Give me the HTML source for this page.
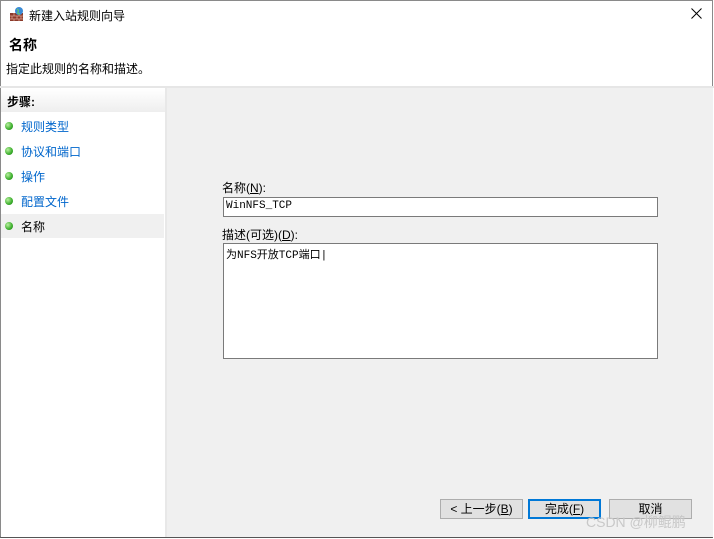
<!DOCTYPE html>
<html><head><meta charset="utf-8"><style>
*{margin:0;padding:0;box-sizing:border-box}
body{width:714px;height:539px;background:#fff;font-family:"Liberation Sans","Noto Sans CJK SC",sans-serif;font-size:12px;color:#000;position:relative;overflow:hidden}
.win{position:absolute;left:0;top:0;width:713px;height:538px;border:1px solid #8a8a8a;border-bottom:2px solid #555;background:#fff}
.in{position:absolute;left:-1px;top:-1px;width:714px;height:539px}
.abs{position:absolute;white-space:nowrap}
.dot{position:absolute;left:5px;width:8px;height:8px;border-radius:50%;background:radial-gradient(circle at 35% 35%,#b8f0a0,#3cae2c 60%,#1d7a16)}
.step{position:absolute;left:21px;color:#0066cc;font-size:12px}
.btn{position:absolute;top:499px;height:20px;background:#e1e1e1;border:1px solid #adadad;text-align:center;line-height:18px;font-size:12px}
.box{position:absolute;background:#fff;border:1px solid #7a7a7a}
.mono{font-family:"Liberation Mono","Noto Sans CJK SC",monospace;font-size:11px}
</style></head><body><div class="win"><div class="in">
<svg class="abs" style="left:9px;top:6px" width="16" height="16" viewBox="0 0 16 16"><rect x="1" y="7" width="13" height="8" fill="#8b3a2a"/><path d="M1 10h13M1 13h13M5 7v3M10 7v3M3 10v3M8 10v3M12 10v3M5 13v2M10 13v2" stroke="#d9a090" stroke-width=".8"/><circle cx="10" cy="5" r="4" fill="#3a8ad6"/><path d="M8 3q2 1 1 3t2 2" stroke="#6c6" stroke-width="1.2" fill="none"/></svg>
<div class="abs" style="left:29px;top:7px;font-size:12px">新建入站规则向导</div>
<svg class="abs" style="left:691px;top:8px" width="11" height="11"><path d="M0.5 .5L10.5 10.5M10.5 .5L.5 10.5" stroke="#000" stroke-width="1"/></svg>
<div class="abs" style="left:9px;top:35px;font-size:14px;font-weight:bold">名称</div>
<div class="abs" style="left:6px;top:60px">指定此规则的名称和描述。</div>
<div class="abs" style="left:0;top:86px;width:714px;height:2px;background:#e6e6e6"></div>
<div class="abs" style="left:1px;top:88px;width:712px;height:449px;background:#f0f0f0"></div>
<div class="abs" style="left:1px;top:88px;width:166px;height:449px;background:#fff;border-right:2px solid #e8e8e8"></div>
<div class="abs" style="left:1px;top:89px;width:164px;height:23px;background:linear-gradient(#fff,#eee)"></div>
<div class="abs" style="left:7px;top:93px;font-weight:bold">步骤:</div>
<div class="abs" style="left:1px;top:214px;width:163px;height:24px;background:#f0f0f0"></div>
<div class="dot" style="top:122px"></div><div class="step" style="top:118px">规则类型</div>
<div class="dot" style="top:147px"></div><div class="step" style="top:143px">协议和端口</div>
<div class="dot" style="top:172px"></div><div class="step" style="top:168px">操作</div>
<div class="dot" style="top:197px"></div><div class="step" style="top:193px">配置文件</div>
<div class="dot" style="top:222px"></div><div class="step" style="top:218px;color:#000">名称</div>
<div class="abs" style="left:222px;top:179px">名称(<u>N</u>):</div>
<div class="box" style="left:223px;top:197px;width:435px;height:20px"><span class="abs mono" style="left:2px;top:2px">WinNFS_TCP</span></div>
<div class="abs" style="left:222px;top:226px">描述(可选)(<u>D</u>):</div>
<div class="box" style="left:223px;top:243px;width:435px;height:116px"><span class="abs mono" style="left:2px;top:2px">为NFS开放TCP端口|</span></div>
<div class="btn" style="left:440px;width:83px">&lt; 上一步(<u>B</u>)</div>
<div class="btn" style="left:528px;width:73px;border:2px solid #0078d7;line-height:16px">完成(<u>F</u>)</div>
<div class="btn" style="left:609px;width:83px">取消</div>
<div class="abs" style="left:586px;top:512px;font-size:14px;color:#c8c8c8">CSDN @柳鲲鹏</div>
</div></div></body></html>
